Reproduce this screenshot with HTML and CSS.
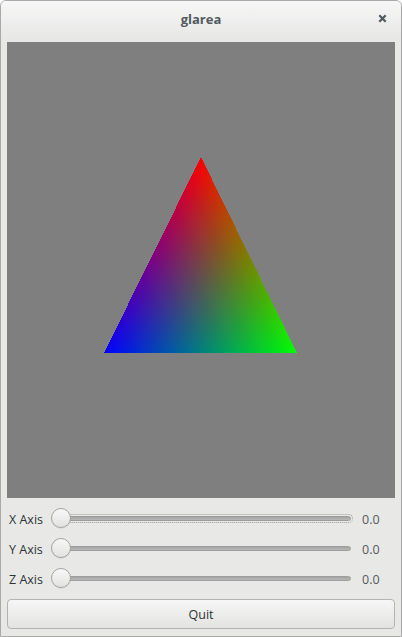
FILE: index.html
```html
<!DOCTYPE html>
<html>
<head>
<meta charset="utf-8">
<link rel="stylesheet" href="styles.css">
</head>
<body>
<div class="window">
  <div class="titlebar">
    <span class="title">glarea</span>
    <span class="close">
      <svg width="9" height="9" viewBox="0 0 9 9"><path d="M1.3 1.3 L7.7 7.7 M7.7 1.3 L1.3 7.7" stroke="#4f5a60" stroke-width="2.2" stroke-linecap="butt"/></svg>
    </span>
  </div>
  <div class="content">
    <div class="glarea">
      <svg class="tri" width="388" height="456" viewBox="0 0 388 456" shape-rendering="crispEdges">
        <defs>
          <linearGradient id="gr" gradientUnits="userSpaceOnUse" x1="194" y1="115" x2="194" y2="311">
            <stop offset="0" stop-color="#ff0000"/><stop offset="1" stop-color="#000000"/>
          </linearGradient>
          <linearGradient id="gg" gradientUnits="userSpaceOnUse" x1="290" y1="311" x2="134.97" y2="234.28">
            <stop offset="0" stop-color="#00ff00"/><stop offset="1" stop-color="#000000"/>
          </linearGradient>
          <linearGradient id="gb" gradientUnits="userSpaceOnUse" x1="97" y1="311" x2="252.66" y2="234.76">
            <stop offset="0" stop-color="#0000ff"/><stop offset="1" stop-color="#000000"/>
          </linearGradient>
        </defs>
        <g class="iso">
          <polygon points="194,115 97,311 290,311" fill="#000"/>
          <polygon class="add" points="194,115 97,311 290,311" fill="url(#gr)"/>
          <polygon class="add" points="194,115 97,311 290,311" fill="url(#gg)"/>
          <polygon class="add" points="194,115 97,311 290,311" fill="url(#gb)"/>
        </g>
      </svg>
    </div>
    <div class="rows">
      <div class="row">
        <span class="label">X Axis</span>
        <div class="slider focused"><div class="trough"></div><div class="knob"></div></div>
        <span class="value">0.0</span>
      </div>
      <div class="row">
        <span class="label">Y Axis</span>
        <div class="slider"><div class="trough"></div><div class="knob"></div></div>
        <span class="value">0.0</span>
      </div>
      <div class="row">
        <span class="label">Z Axis</span>
        <div class="slider"><div class="trough"></div><div class="knob"></div></div>
        <span class="value">0.0</span>
      </div>
    </div>
    <button class="quit">Quit</button>
  </div>
</div>
</body>
</html>
```

FILE: styles.css
```css
* { box-sizing: border-box; }
html, body { margin: 0; padding: 0; background: #ffffff; }
body { width: 402px; height: 637px; overflow: hidden; font-family: "Open Sans", "Noto Sans", sans-serif; }

.window {
  width: 402px;
  height: 637px;
  border: 1px solid #a9a9a9;
  border-radius: 6px 6px 0 0;
  background: #e8e8e7;
  display: flex;
  flex-direction: column;
  overflow: hidden;
}

.titlebar {
  height: 35px;
  flex: none;
  position: relative;
  display: flex;
  align-items: center;
  justify-content: center;
  background: linear-gradient(to bottom, #f7f7f7, #e8e8e7);
}
.title {
  font-weight: bold;
  font-size: 13px;
  color: #4f5a60;
  margin-top: 1px;
}
.close {
  position: absolute;
  right: 14px;
  top: 13px;
  width: 9px;
  height: 9px;
  display: flex;
}

.content {
  flex: 1;
  padding: 6px 6px 7px 6px;
  display: flex;
  flex-direction: column;
}

.glarea {
  height: 456px;
  flex: none;
  background: #7f7f7f;
  display: flex;
}
.tri { display: block; }
.iso { isolation: isolate; }
.add { mix-blend-mode: screen; }

.rows {
  margin-top: 5px;
  display: flex;
  flex-direction: column;
}
.row {
  height: 30px;
  display: flex;
  align-items: center;
}
.label {
  width: 44px;
  padding-left: 2px;
  padding-top: 2px;
  font-size: 12.5px;
  color: #2e3436;
  flex: none;
}
.slider {
  position: relative;
  width: 300px;
  height: 22px;
  flex: none;
  display: flex;
  align-items: center;
}
.trough {
  margin-left: 10px;
  width: 290px;
  height: 5px;
  border-radius: 3px;
  background: linear-gradient(to bottom, #a3a3a3, #b9b9b9);
  border: 1px solid #9d9d9d;
}
.slider.focused .trough {
  outline: 1px dotted #9a9a9a;
  outline-offset: 1px;
}
.knob {
  position: absolute;
  left: 0;
  top: 1px;
  width: 20px;
  height: 20px;
  border-radius: 50%;
  border: 1px solid #a4a4a2;
  background: linear-gradient(to bottom, #f8f8f8, #e2e2e1);
  box-shadow: 0 1px 0 rgba(0,0,0,0.06);
}
.value {
  margin-left: 11px;
  padding-top: 2px;
  font-size: 12.5px;
  color: #555a5c;
}

.quit {
  margin-top: 6px;
  height: 30px;
  width: 100%;
  border: 1px solid #b3b3b1;
  border-radius: 4px;
  background: linear-gradient(to bottom, #f6f6f6, #e3e3e2);
  font-family: "Open Sans", "Noto Sans", sans-serif;
  font-size: 12.5px;
  color: #2e3436;
  padding: 0;
}
```
